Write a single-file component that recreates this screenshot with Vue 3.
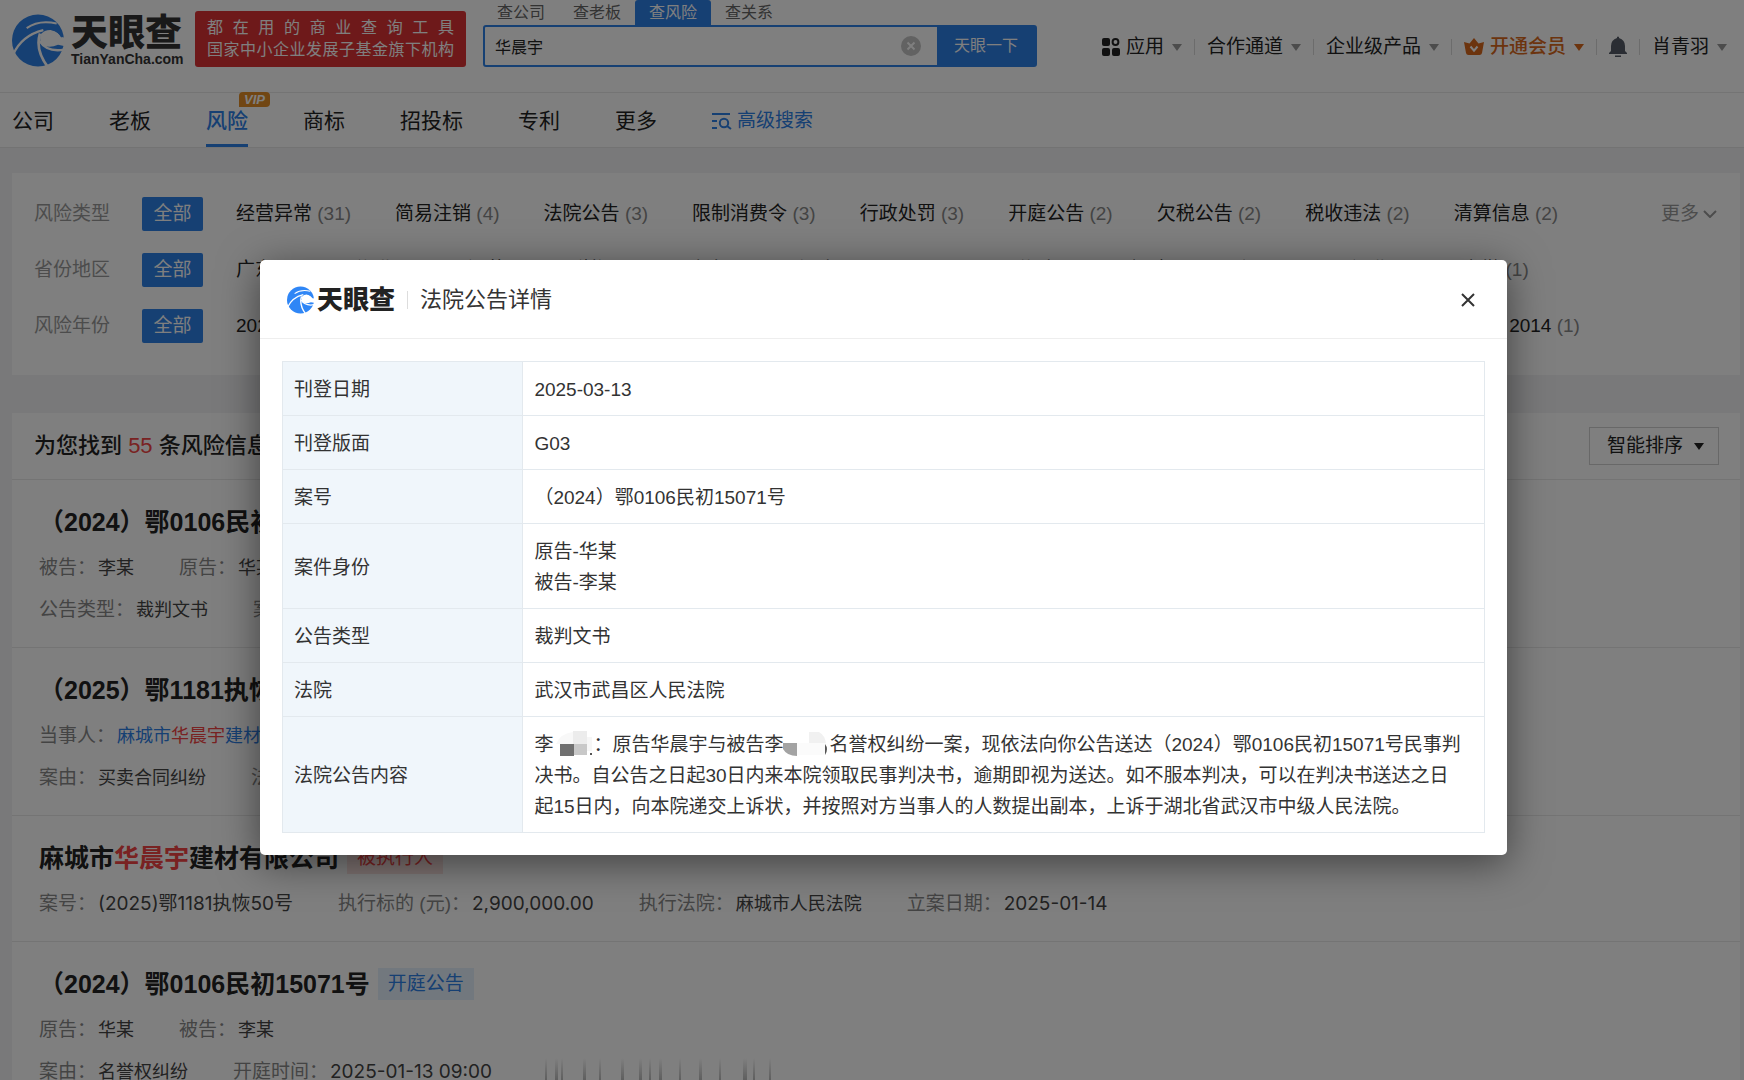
<script setup>
import { ref } from 'vue'

const keyword = ref('华晨宇')
const sort = ref('智能排序')

const searchTabs = [
  { name: '查公司' },
  { name: '查老板' },
  { name: '查风险', active: true },
  { name: '查关系' }
]

const navItems = [
  { name: '公司' },
  { name: '老板' },
  { name: '风险', active: true },
  { name: '商标' },
  { name: '招投标' },
  { name: '专利' },
  { name: '更多' }
]

const filters = [
  {
    label: '风险类型',
    more: true,
    options: [['经营异常', 31], ['简易注销', 4], ['法院公告', 3], ['限制消费令', 3], ['行政处罚', 3], ['开庭公告', 2], ['欠税公告', 2], ['税收违法', 2], ['清算信息', 2]]
  },
  {
    label: '省份地区',
    options: [['广东', 10], ['湖北', 8], ['江苏', 6], ['浙江', 5], ['山东', 4], ['河南', 4], ['四川', 3], ['湖南', 3], ['福建', 2], ['江西', 2], ['河北', 1], ['安徽', 1]]
  },
  {
    label: '风险年份',
    options: [['2025', 12], ['2024', 9], ['2023', 8], ['2022', 6], ['2021', 5], ['2020', 4], ['2019', 3], ['2018', 2], ['2017', 2], ['2016', 1], ['2015', 1], ['2014', 1]]
  }
]

const results = [
  {
    title: [['（2024）鄂0106民初15071号']],
    rows: [
      [['被告', [['李某']]], ['原告', [['华某']]]],
      [['公告类型', [['裁判文书']]], ['案由', [['名誉权纠纷']]]]
    ]
  },
  {
    title: [['（2025）鄂1181执恢50号']],
    rows: [
      [['当事人', [['麻城市', 'link'], ['华晨宇', 'hit'], ['建材有限公司', 'link']]]],
      [['案由', [['买卖合同纠纷']]], ['法院', [['麻城市人民法院']]]]
    ]
  },
  {
    title: [['麻城市'], ['华晨宇', 'hit'], ['建材有限公司']],
    tag: '被执行人',
    danger: true,
    rows: [
      [['案号', [['(2025)鄂1181执恢50号', 'num']]], ['执行标的 (元)', [['2,900,000.00', 'num']]], ['执行法院', [['麻城市人民法院']]], ['立案日期', [['2025-01-14', 'num']]]]
    ]
  },
  {
    title: [['（2024）鄂0106民初15071号']],
    tag: '开庭公告',
    rows: [
      [['原告', [['华某']]], ['被告', [['李某']]]],
      [['案由', [['名誉权纠纷']]], ['开庭时间', [['2025-01-13 09:00', 'num']]]]
    ],
    masked: true
  }
]

const streaks = [
  [8, 2], [18, 3], [24, 2], [46, 3], [62, 2], [84, 3], [102, 3], [112, 2], [122, 3], [142, 2], [162, 3], [182, 2], [206, 4], [216, 2], [232, 2]
]
</script>

<template>
  <div class="page">
    <svg class="defs" aria-hidden="true">
      <defs>
        <mask id="swirl-mask" maskUnits="userSpaceOnUse" x="0" y="0" width="192" height="192">
          <rect width="192" height="192" fill="#fff" />
          <path d="M104 78Q118 62 142 66Q158 72 164 86L190 92V116L156 110Q132 120 112 112Q98 98 104 78Z" fill="#000" />
          <path d="M20 142Q46 82 112 66" fill="none" stroke="#000" stroke-width="7" />
          <path d="M62 60Q98 34 152 46" fill="none" stroke="#000" stroke-width="6" />
          <path d="M102 76Q86 126 128 180" fill="none" stroke="#000" stroke-width="8" />
          <path d="M100 98Q124 134 176 124" fill="none" stroke="#000" stroke-width="7" />
        </mask>
        <symbol id="swirl" viewBox="18 18 156 158">
          <circle cx="96" cy="97" r="78" fill="currentColor" mask="url(#swirl-mask)" />
          <path d="M130 50Q160 54 168 90Q158 70 136 66Z" fill="currentColor" />
        </symbol>
      </defs>
    </svg>

    <header class="top">
      <a class="brand" href="#">
        <svg class="brand-mark"><use href="#swirl" /></svg>
        <span class="brand-text">
          <span class="brand-cn">天眼查</span>
          <span class="brand-en">TianYanCha.com</span>
        </span>
      </a>
      <div class="slogan">
        <p>都在用的商业查询工具</p>
        <p>国家中小企业发展子基金旗下机构</p>
      </div>
      <form class="search" @submit.prevent>
        <div class="search-tabs">
          <button v-for="t in searchTabs" :key="t.name" type="button" :class="{ active: t.active }">{{ t.name }}</button>
        </div>
        <div class="search-box">
          <input v-model="keyword" type="text" aria-label="搜索关键词" />
          <button class="clear" type="button" aria-label="清空" @click="keyword = ''">
            <svg viewBox="0 0 20 20"><circle cx="10" cy="10" r="10" fill="#c4c4c4" /><path d="M6.500 6.500L13.500 13.500M13.500 6.500L6.500 13.500" stroke="#fff" stroke-width="2" /></svg>
          </button>
          <button class="go" type="submit">天眼一下</button>
        </div>
      </form>
      <nav class="tools">
        <a href="#">
          <svg class="ic-app" viewBox="0 0 18 18"><rect width="8" height="8" rx="2" /><circle cx="13.500" cy="4" r="2.900" fill="none" stroke="currentColor" stroke-width="2" /><rect y="10" width="8" height="8" rx="2" /><rect x="10" y="10" width="8" height="8" rx="2" /></svg>应用<i class="caret"></i>
        </a>
        <a href="#">合作通道<i class="caret"></i></a>
        <a href="#">企业级产品<i class="caret"></i></a>
        <a class="vip" href="#">
          <svg class="ic-crown" viewBox="0 0 20 18"><path d="M0 4L5.500 5.500L10 0L14.500 5.500L20 4L18 15Q17.600 17 15.500 17H4.500Q2.400 17 2 15Z" /><path d="M6.500 8.500L10 12.700L13.500 8.500" fill="none" stroke="#fff" stroke-width="2" /></svg>开通会员<i class="caret"></i>
        </a>
        <a href="#" aria-label="消息">
          <svg class="ic-bell" viewBox="0 0 18 22"><path d="M8 1Q9 0 10 1V2Q16 4 16 10V15L18 17V18H0V17L2 15V10Q2 4 8 2ZM6 19.500H12V21H6Z" /></svg>
        </a>
        <a href="#">肖青羽<i class="caret"></i></a>
      </nav>
    </header>

    <nav class="nav">
      <a v-for="n in navItems" :key="n.name" href="#" :class="{ active: n.active }">{{ n.name }}<em v-if="n.active">VIP</em></a>
      <a class="advanced" href="#">
        <svg viewBox="0 0 20 18"><path d="M0 2H18M0 9H5M0 16H5" /><circle cx="12" cy="11" r="4.200" /><path d="M15 14L19 17" /></svg>高级搜索
      </a>
    </nav>

    <main>
      <section class="card filters">
        <div v-for="f in filters" :key="f.label" class="filter">
          <span class="filter-label">{{ f.label }}</span>
          <button class="all" type="button">全部</button>
          <ul>
            <li v-for="o in f.options" :key="o[0]"><a href="#">{{ o[0] }} <small>({{ o[1] }})</small></a></li>
          </ul>
          <a v-if="f.more" class="more" href="#">更多<svg viewBox="0 0 14 8"><path d="M1 1L7 7L13 1" /></svg></a>
        </div>
      </section>

      <section class="card">
        <div class="found">
          <h2>为您找到 <b>55</b> 条风险信息</h2>
          <div class="sort">
            <select v-model="sort" aria-label="排序方式"><option>智能排序</option></select>
            <i class="caret"></i>
          </div>
        </div>
        <article v-for="(r, i) in results" :key="i" class="item">
          <h3>
            <a href="#"><span v-for="p in r.title" :key="p[0]" :class="p[1]">{{ p[0] }}</span></a>
            <span v-if="r.tag" class="tag" :class="{ danger: r.danger }">{{ r.tag }}</span>
          </h3>
          <div v-for="(row, j) in r.rows" :key="j" class="meta">
            <span v-for="m in row" :key="m[0]" class="pair">
              <span class="key">{{ m[0] }}：</span>
              <span class="val"><span v-for="p in m[1]" :key="p[0]" :class="p[1]">{{ p[0] }}</span></span>
            </span>
            <svg v-if="r.masked && j === 1" class="streaks" viewBox="0 0 240 28" preserveAspectRatio="none">
              <defs>
                <linearGradient id="fade" x1="0" y1="0" x2="0" y2="1"><stop offset="0" stop-color="#aaa" stop-opacity="0" /><stop offset="1" stop-color="#aaa" /></linearGradient>
              </defs>
              <rect v-for="s in streaks" :key="s[0]" :x="s[0]" y="0" :width="s[1]" height="28" fill="url(#fade)" />
            </svg>
          </div>
        </article>
      </section>
    </main>

    <div class="overlay">
      <div class="dialog" role="dialog" aria-modal="true" aria-labelledby="dialog-title">
        <header>
          <svg class="dialog-mark"><use href="#swirl" /></svg>
          <span class="dialog-brand">天眼查</span>
          <h1 id="dialog-title">法院公告详情</h1>
          <button type="button" aria-label="关闭"><svg viewBox="0 0 14 14"><path d="M1 1L13 13M13 1L1 13" /></svg></button>
        </header>
        <table>
          <tbody>
            <tr><th scope="row">刊登日期</th><td>2025-03-13</td></tr>
            <tr><th scope="row">刊登版面</th><td>G03</td></tr>
            <tr><th scope="row">案号</th><td>（2024）鄂0106民初15071号</td></tr>
            <tr><th scope="row">案件身份</th><td>原告-华某<br />被告-李某</td></tr>
            <tr><th scope="row">公告类型</th><td>裁判文书</td></tr>
            <tr><th scope="row">法院</th><td>武汉市武昌区人民法院</td></tr>
            <tr>
              <th scope="row">法院公告内容</th>
              <td>李<svg class="mosaic" viewBox="0 0 40 26"><path d="M3 13Q8 2 20 1V13Z" fill="#f8f8f8" /><rect x="20" width="14" height="13" fill="#ececec" /><rect x="34" y="6" width="5" height="14" fill="#f6f6f6" /><rect x="7" y="13" width="14" height="12" fill="#707070" /><rect x="21" y="13" width="13" height="11" fill="#c8c8c8" /><rect x="37" y="22" width="2" height="2" fill="#555" /></svg>：原告华晨宇与被告李<svg class="mosaic wide" viewBox="0 0 46 26"><path d="M0 12H14V25Q4 25 0 18Z" fill="#a3a3a3" /><path d="M26 1H36Q42 4 43 13H26Z" fill="#f1f1f1" /><path d="M14 12H43V24H14Z" fill="#fbfbfb" /><path d="M42 13Q46 18 42 24Z" fill="#555" /></svg>名誉权纠纷一案，现依法向你公告送达（2024）鄂0106民初15071号民事判决书。自公告之日起30日内来本院领取民事判决书，逾期即视为送达。如不服本判决，可以在判决书送达之日起15日内，向本院递交上诉状，并按照对方当事人的人数提出副本，上诉于湖北省武汉市中级人民法院。</td>
            </tr>
          </tbody>
        </table>
      </div>
    </div>
  </div>
</template>

<style>
body {
  margin: 0;
}
</style>

<style scoped>
.page {
  --blue: #2d80e6;
  position: relative;
  height: 100vh;
  overflow: hidden;
  background: #f3f3f4;
  color: #222;
  font: 19px/28px "Liberation Sans", "Noto Sans CJK SC", sans-serif;
}
.page * {
  box-sizing: border-box;
}
a {
  color: inherit;
  text-decoration: none;
}
button,
input,
select {
  font: inherit;
  color: inherit;
  border: 0;
  padding: 0;
  margin: 0;
  background: none;
}
h1,
h2,
h3,
p,
ul {
  margin: 0;
  padding: 0;
  list-style: none;
}
svg {
  display: block;
  flex: none;
}
.defs {
  position: absolute;
  width: 0;
  height: 0;
}
.caret {
  width: 0;
  border: 5px solid transparent;
  border-top: 7px solid currentColor;
  border-bottom: 0;
}

/* top bar */
.top {
  display: flex;
  align-items: flex-start;
  height: 93px;
  padding: 0 17px 0 12px;
  background: #fff;
  border-bottom: 1px solid #e8e8e8;
}
.brand {
  display: flex;
  gap: 7px;
  margin-top: 14px;
}
.brand-mark {
  width: 52px;
  height: 53px;
  color: var(--blue);
}
.brand-text {
  display: flex;
  flex-direction: column;
  width: 112px;
}
.brand-cn {
  font-size: 37px;
  line-height: 40px;
  font-weight: 900;
  color: #333;
}
.brand-en {
  font-size: 14px;
  line-height: 10px;
  font-weight: 700;
  color: #333;
}
.slogan {
  width: 271px;
  height: 56px;
  margin: 11px 0 0 12px;
  padding: 6px 12px;
  border-radius: 3px;
  background: #dc3234;
  color: #fff;
  font-size: 16px;
  line-height: 22px;
}
.slogan p {
  text-align: justify;
  text-align-last: justify;
}
.search {
  width: 554px;
  margin-left: 17px;
}
.search-tabs {
  display: flex;
}
.search-tabs button {
  width: 76px;
  height: 25px;
  font-size: 16px;
  line-height: 25px;
  color: #666;
}
.search-tabs .active {
  border-radius: 3px 3px 0 0;
  background: var(--blue);
  color: #fff;
}
.search-box {
  display: flex;
  align-items: center;
  height: 42px;
  border: 2px solid var(--blue);
  border-radius: 3px;
  font-size: 16px;
}
.search-box input {
  flex: 1;
  min-width: 0;
  height: 38px;
  padding-left: 10px;
  outline: 0;
}
.clear {
  width: 20px;
  margin-right: 16px;
}
.go {
  width: 98px;
  height: 38px;
  background: var(--blue);
  color: #fff;
}
.tools {
  display: flex;
  align-items: center;
  margin: 33px 0 0 auto;
}
.tools a {
  display: flex;
  align-items: center;
}
.tools a + a {
  margin-left: 12px;
}
.tools a + a::before {
  content: "";
  width: 1px;
  height: 16px;
  margin-right: 12px;
  background: #d8d8d8;
}
.tools .caret {
  margin-left: 8px;
  color: #999;
}
.tools .vip {
  color: #d8681c;
  font-weight: 500;
}
.tools .vip .caret {
  color: #d8681c;
}
.tools svg {
  fill: currentColor;
}
.ic-app {
  width: 18px;
  height: 18px;
  margin-right: 6px;
}
.ic-crown {
  width: 20px;
  height: 18px;
  margin-right: 6px;
}
.ic-bell {
  width: 18px;
  height: 22px;
  color: #555b66;
}

/* category nav */
.nav {
  display: flex;
  gap: 55px;
  height: 55px;
  padding-left: 12px;
  background: #fff;
  border-bottom: 1px solid #e6e6e6;
  font-size: 21px;
  line-height: 56px;
}
.nav a {
  position: relative;
}
.nav .active {
  color: var(--blue);
  font-weight: 500;
  border-bottom: 3px solid var(--blue);
}
.nav em {
  position: absolute;
  left: 33px;
  top: -1px;
  width: 31px;
  height: 15px;
  border-radius: 4px 4px 4px 0;
  background: #e38d26;
  color: #fff;
  font-size: 13px;
  font-weight: 700;
  line-height: 15px;
  text-align: center;
}
.nav .advanced {
  display: flex;
  align-items: center;
  gap: 5px;
  padding-top: 2px;
  color: var(--blue);
  font-size: 19px;
}
.advanced svg {
  width: 20px;
  height: 18px;
  fill: none;
  stroke: currentColor;
  stroke-width: 2;
}

/* cards */
main {
  display: flex;
  flex-direction: column;
  gap: 38px;
  padding: 25px 4px 0 12px;
}
.card {
  background: #fff;
}
.filters {
  display: flex;
  flex-direction: column;
  gap: 22px;
  padding: 24px 23px 32px 22px;
}
.filter {
  display: flex;
  align-items: center;
  height: 34px;
  white-space: nowrap;
}
.filter-label {
  width: 108px;
  color: #999;
}
.all {
  width: 61px;
  height: 34px;
  margin-right: 33px;
  border-radius: 2px;
  background: var(--blue);
  color: #fff;
}
.filter ul {
  display: flex;
  flex: 1;
  gap: 44px;
}
.filter small {
  font-size: 19px;
  color: #888;
}
.more {
  display: flex;
  align-items: center;
  gap: 4px;
  color: #999;
}
.more svg {
  width: 14px;
  height: 8px;
  fill: none;
  stroke: currentColor;
  stroke-width: 2;
}
.found {
  display: flex;
  align-items: center;
  justify-content: space-between;
  height: 67px;
  padding: 0 21px 0 22px;
  border-bottom: 1px solid #e8e8e8;
}
.found h2 {
  font-size: 22px;
  font-weight: 500;
}
.found b {
  color: #f24444;
  font-weight: 500;
}
.sort {
  position: relative;
  display: flex;
  align-items: center;
  width: 130px;
  height: 38px;
  border: 1px solid #d0d0d0;
}
.sort select {
  appearance: none;
  width: 100%;
  height: 36px;
  padding-left: 17px;
}
.sort .caret {
  position: absolute;
  right: 14px;
  pointer-events: none;
}
.item {
  padding: 24px 27px 16px;
  border-bottom: 1px solid #e8e8e8;
  white-space: nowrap;
}
.item h3 {
  display: flex;
  align-items: center;
  gap: 8px;
  height: 36px;
  margin-bottom: 7px;
  font-size: 25px;
  font-weight: 700;
}
.tag {
  height: 32px;
  padding: 0 10px;
  background: #e4f0fc;
  color: var(--blue);
  font-size: 19px;
  font-weight: 400;
  line-height: 31px;
}
.tag.danger {
  background: #fce4e2;
  color: #f24444;
}
.meta {
  display: flex;
  align-items: center;
  gap: 45px;
  height: 42px;
}
.pair {
  display: flex;
  gap: 2px;
}
.key {
  color: #888;
}
.val {
  color: #444;
  font-family: Inter, "Noto Sans CJK SC", sans-serif;
  font-size: 18px;
}
.num {
  font-size: 19px;
}
.link {
  color: var(--blue);
}
.hit {
  color: #f24444;
}
.streaks {
  width: 240px;
  height: 28px;
}

/* dialog */
.overlay {
  position: absolute;
  inset: 0;
  padding: 260px 237px 0 260px;
  background: rgba(0, 0, 0, 0.5);
}
.dialog {
  padding-bottom: 22px;
  border-radius: 5px;
  background: #fff;
  box-shadow: 0 8px 40px rgba(0, 0, 0, 0.5);
  color: #333;
}
.dialog header {
  display: flex;
  align-items: center;
  height: 79px;
  padding: 2px 32px 0 27px;
  border-bottom: 1px solid #eee;
}
.dialog-mark {
  width: 27px;
  height: 28px;
  color: #2f86f6;
}
.dialog-brand {
  margin-left: 3px;
  font-size: 26px;
  font-weight: 900;
  color: #222;
}
.dialog h1 {
  display: flex;
  align-items: center;
  gap: 12px;
  margin-left: 12px;
  font-size: 22px;
  font-weight: 400;
}
.dialog h1::before {
  content: "";
  width: 1px;
  height: 18px;
  background: #ddd;
}
.dialog header button {
  margin-left: auto;
}
.dialog header button svg {
  width: 14px;
  height: 14px;
  stroke: #333;
  stroke-width: 2;
}
table {
  width: calc(100% - 44px);
  margin: 22px 22px 0;
  border-collapse: collapse;
  line-height: 31px;
}
th,
td {
  padding: 12px 20px 10px 11px;
  border: 1px solid #e3e9ee;
  text-align: left;
  font-weight: 400;
}
th {
  width: 20%;
  background: #f0f6fb;
}
.mosaic {
  display: inline-block;
  width: 40px;
  height: 26px;
  vertical-align: -6px;
}
.mosaic.wide {
  width: 46px;
}
</style>
